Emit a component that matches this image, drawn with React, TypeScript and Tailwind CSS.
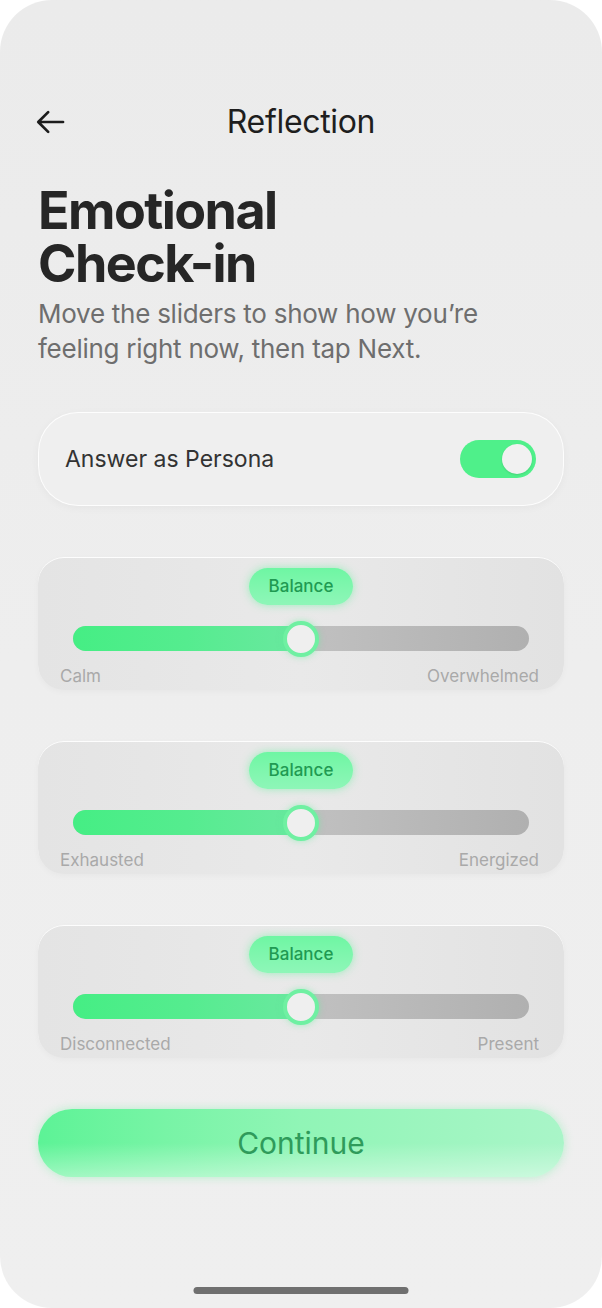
import { useState } from 'react';

interface SliderRow {
  left: string;
  right: string;
  value: number;
}

const rows: SliderRow[] = [
  { left: 'Calm', right: 'Overwhelmed', value: 50 },
  { left: 'Exhausted', right: 'Energized', value: 50 },
  { left: 'Disconnected', right: 'Present', value: 50 },
];

function BackArrow() {
  return (
    <svg className="w-[34px] h-[34px]" viewBox="0 0 24 24" fill="none" stroke="#1c1c1c" strokeWidth={1.9} strokeLinecap="round" strokeLinejoin="round">
      <path d="M20.5 12H3.5M10 5l-7 7 7 7" />
    </svg>
  );
}

function Toggle({ on, onChange }: { on: boolean; onChange: (v: boolean) => void }) {
  return (
    <button
      onClick={() => onChange(!on)}
      className={`w-[76px] h-[38px] rounded-full p-[4px] flex items-center ${on ? 'bg-[#4ff08a] justify-end' : 'bg-[#cfcfcf] justify-start'}`}
    >
      <span className="w-[30px] h-[30px] rounded-full bg-[#f1f1f1] shadow-[0_1px_2px_rgba(0,0,0,0.12)]" />
    </button>
  );
}

function SliderCard({ row }: { row: SliderRow }) {
  return (
    <div className="h-[133px] rounded-[26px] bg-gradient-to-r from-[#e4e4e4] via-[#e9e9e9] to-[#e2e2e2] shadow-[0_1px_0_rgba(255,255,255,0.9)_inset,0_2px_6px_rgba(0,0,0,0.03)] pt-[11px] px-[22px] flex flex-col">
      <div className="flex justify-center">
        <div className="h-[37px] w-[104px] rounded-full bg-gradient-to-b from-[#6ef6a3] to-[#8ef6b8] shadow-[0_0_8px_rgba(90,240,150,0.55)] flex items-center justify-center text-[17px] font-medium text-[#1f9a52]">
          Balance
        </div>
      </div>
      <div className="relative mt-[21px] mx-[13px] h-[25px]">
        <div className="absolute inset-0 rounded-full bg-gradient-to-r from-[#d2d2d2] to-[#b0b0b0]" />
        <div
          className="absolute left-0 top-0 bottom-0 rounded-l-full bg-gradient-to-r from-[#45ee84] via-[#55ec8f] to-[#6ae8a0]"
          style={{ width: `${row.value}%` }}
        />
        <div
          className="absolute top-1/2 w-[36px] h-[36px] -translate-x-1/2 -translate-y-1/2 rounded-full bg-[#efefef] border-[4px] border-[#6ff0a2] shadow-[0_0_6px_rgba(90,240,150,0.5)]"
          style={{ left: `${row.value}%` }}
        />
      </div>
      <div className="flex justify-between mt-[14px] text-[17px] leading-[22px] text-[#a9a9a9]">
        <span>{row.left}</span>
        <span className="mr-[3px]">{row.right}</span>
      </div>
    </div>
  );
}

export default function App() {
  const [persona, setPersona] = useState(true);

  return (
    <div className="w-[602px] h-[1308px] bg-white" style={{ fontFamily: 'Inter, "Noto Sans", sans-serif' }}>
      <div className="relative h-full rounded-[52px] bg-gradient-to-b from-[#ebebeb] via-[#eeeeee] to-[#efefef] px-[38px] pt-[98px] flex flex-col">
        <div className="relative h-[48px] flex items-center justify-center">
          <div className="absolute left-[-4px] top-1/2 -translate-y-1/2">
            <BackArrow />
          </div>
          <h1 className="text-[32px] text-[#1e1e1e] tracking-[-0.01em]">Reflection</h1>
        </div>

        <h2 className="mt-[38px] text-[52px] font-bold tracking-[-0.03em] text-[#262626]">
          <span className="block leading-[53px]">Emotional</span>
          <span className="block leading-[53px]">Check-in</span>
        </h2>
        <p className="mt-[6px] text-[26px] leading-[35px] text-[#6e6e6e] tracking-[-0.01em]">
          Move the sliders to show how you’re
          <br />
          feeling right now, then tap Next.
        </p>

        <div className="mt-[46px] h-[94px] rounded-[40px] bg-[#efefef] border border-white/90 shadow-[0_2px_8px_rgba(0,0,0,0.04)] flex items-center justify-between pl-[26px] pr-[27px]">
          <span className="text-[23px] text-[#333333]">Answer as Persona</span>
          <Toggle on={persona} onChange={setPersona} />
        </div>

        <div className="mt-[51px] flex flex-col gap-[51px]">
          {rows.map(r => (
            <SliderCard key={r.left} row={r} />
          ))}
        </div>

        <button className="relative mt-[51px] h-[68px] rounded-full overflow-hidden bg-gradient-to-r from-[#5cf396] via-[#90f5b6] to-[#a9f5c8] shadow-[0_0_10px_rgba(110,240,160,0.45)] text-[30px] text-[#2f9b5b]">
          <span className="absolute inset-0 bg-gradient-to-b from-transparent via-transparent to-white/40" />
          <span className="relative">Continue</span>
        </button>

        <div className="absolute bottom-[14px] left-1/2 -translate-x-1/2 w-[215px] h-[7px] rounded-full bg-[#6f6f6f]" />
      </div>
    </div>
  );
}
